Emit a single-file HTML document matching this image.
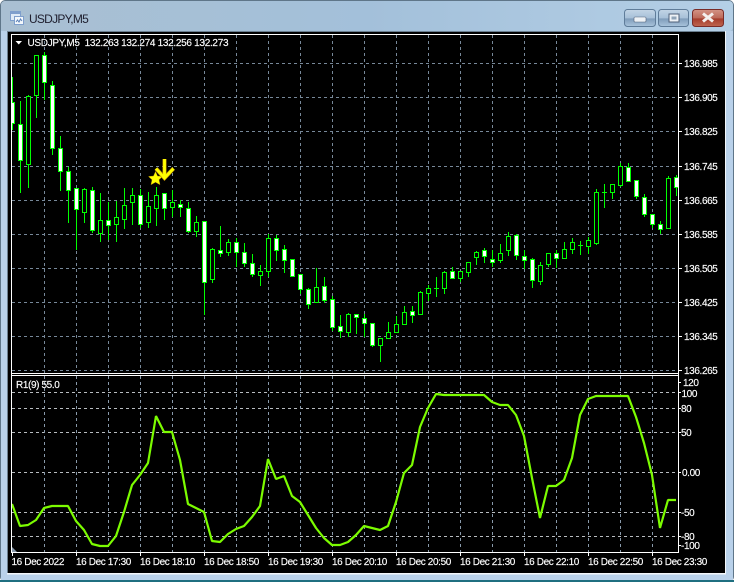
<!DOCTYPE html>
<html><head><meta charset="utf-8"><style>
html,body{margin:0;padding:0;width:736px;height:583px;overflow:hidden;background:#fff}
svg{display:block;position:absolute;left:0;top:0}
text{font-family:"Liberation Sans",sans-serif;font-size:10px;fill:#fff;letter-spacing:-.38px;stroke:#fff;stroke-width:.15px}
</style></head><body>
<svg width="736" height="583" viewBox="0 0 736 583" xmlns="http://www.w3.org/2000/svg">
<defs>
<linearGradient id="t" x1="0" y1="0" x2="1" y2="0"><stop offset="0" stop-color="#a9bfd2"/><stop offset=".5" stop-color="#a3c0da"/><stop offset="1" stop-color="#b4cfe6"/></linearGradient>
<linearGradient id="tv" x1="0" y1="0" x2="0" y2="1"><stop offset="0" stop-color="#a4bfd6"/><stop offset="1" stop-color="#b9d1ea"/></linearGradient>
<linearGradient id="b1" x1="0" y1="0" x2="0" y2="1"><stop offset="0" stop-color="#c3d5e6"/><stop offset=".5" stop-color="#a7c0d8"/><stop offset=".55" stop-color="#7f9cba"/><stop offset="1" stop-color="#a9c4dc"/></linearGradient>
<linearGradient id="b2" x1="0" y1="0" x2="0" y2="1"><stop offset="0" stop-color="#d49486"/><stop offset=".5" stop-color="#bc6a5a"/><stop offset=".55" stop-color="#a63c2c"/><stop offset="1" stop-color="#bf6650"/></linearGradient>
<clipPath id="m"><rect x="12" y="35" width="666" height="338"/></clipPath>
<clipPath id="s"><rect x="12" y="376" width="666" height="176"/></clipPath>
</defs>
<!-- window -->
<rect x="0.5" y="0.5" width="733" height="581" rx="5" fill="url(#tv)" stroke="#5f7689"/>
<rect x="1" y="1" width="732" height="30" rx="4" fill="url(#t)"/>
<rect x="1" y="31" width="7" height="542" fill="#b9d1ea"/>
<rect x="725" y="31" width="8" height="542" fill="#b9d1ea"/>
<rect x="1" y="574" width="732" height="6" fill="#b9d1ea"/>
<rect x="0" y="580" width="734" height="2" fill="#1f6f80"/>
<rect x="7" y="31" width="718" height="543" fill="#6b7f90"/>
<rect x="7" y="573" width="719" height="1.5" fill="#f2f6fa"/>
<rect x="725" y="31" width="1" height="543" fill="#f2f6fa"/>
<rect x="8" y="32" width="717" height="541" fill="#000"/>
<!-- title icon -->
<rect x="10.5" y="11.5" width="10" height="9" fill="#dfeaf6" stroke="#7f9fcc"/>
<rect x="10.5" y="11.5" width="10" height="2.5" fill="#7f9fcc"/>
<rect x="14.5" y="16.5" width="9" height="8" fill="#f4f8fc" stroke="#7f9fcc"/>
<path d="M16 22l1.5-2 1.500 2 1.500-3 1.500 2" fill="none" stroke="#5a80b8"/>
<text x="29" y="23" style="font-size:12px;fill:#202030;stroke:none;letter-spacing:-.75px">USDJPY,M5</text>
<!-- buttons -->
<rect x="624.500" y="9.500" width="31" height="17" rx="3" fill="url(#b1)" stroke="#5f7c99"/>
<rect x="634" y="17" width="12" height="5" rx="1" fill="#eef2f6" stroke="#50617a" stroke-width=".6"/>
<rect x="658.500" y="9.500" width="30" height="17" rx="3" fill="url(#b1)" stroke="#5f7c99"/>
<rect x="669" y="14" width="10" height="8" fill="#eef2f6" stroke="#50617a"/>
<rect x="671.500" y="16.500" width="5" height="3" fill="#90a4b8"/>
<rect x="692.500" y="9.500" width="31" height="17" rx="3" fill="url(#b2)" stroke="#7a2c28"/>
<path d="M703 13.500l10 8M713 13.500l-10 8" stroke="#f4f0ee" stroke-width="3"/>
<!-- chart -->
<g shape-rendering="crispEdges">
<g clip-path="url(#m)" fill="none" stroke="#778899" stroke-dasharray="3 3">
<path d="M12 63.500H678M12 97.500H678M12 131.500H678M12 166.500H678M12 200.500H678M12 234.500H678M12 268.500H678M12 302.500H678M12 336.500H678M12 370.500H678"/>
<path d="M44.500 35V373M76.500 35V373M108.500 35V373M140.500 35V373M172.500 35V373M204.500 35V373M236.500 35V373M268.500 35V373M300.500 35V373M332.500 35V373M364.500 35V373M396.500 35V373M428.500 35V373M460.500 35V373M492.500 35V373M524.500 35V373M556.500 35V373M588.500 35V373M620.500 35V373M652.500 35V373"/>
</g>
<g clip-path="url(#m)">
<path fill="none" stroke="#0f0" d="M12.500 77V130M20.500 101V193M28.500 95V188M36.500 55V118M44.500 52V100M52.500 81V155M60.500 136V191M68.500 167V223M76.500 188V250M84.500 188V223M92.500 187V233M100.500 193V242M108.500 202V240M116.500 201V242M124.500 188V229M132.500 188V225M140.500 189V228M148.500 192V228M156.500 187V226M164.500 193V220M172.500 190V217M180.500 200V217M188.500 202V233M196.500 216V237M204.500 221V315M212.500 248V283M220.500 226V257M228.500 239V256M236.500 238V267M244.500 243V267M252.500 254V277M260.500 265V286M268.500 234V277M276.500 235V261M284.500 245V273M292.500 259V276M300.500 274V294M308.500 288V309M316.500 268V302M324.500 277V303M332.500 296V331M340.500 315V338M348.500 313V337M356.500 314V334M364.500 314V337M372.500 323V347M380.500 338V362M388.500 322V338M396.500 316V332M404.500 306V325M412.500 306V323M420.500 291V315M428.500 285V301M436.500 277V297M444.500 271V294M452.500 267V278M460.500 271V282M468.500 262V277M476.500 251V265M484.500 248V263M492.500 250V267M500.500 244V263M508.500 232V256M516.500 234V260M524.500 250V269M532.500 258V288M540.500 262V285M548.500 253V267M556.500 250V268M564.500 242V258M572.500 238V254M580.500 241V255M588.500 237V254M596.500 189V245M604.500 184V208M612.500 184V199M620.500 163V187M628.500 163V182M636.500 180V199M644.500 194V217M652.500 214V228M660.500 221V234M668.500 176V229M676.500 175V196M434 288.500h5M578 245.500h5M602 192.500h5"/>
<path fill="#000" stroke="#0f0" d="M26.500 96.500h4v68h-4zM34.500 55.500h4v40h-4zM82.500 189.500h4v23h-4zM98.500 220.500h4v13h-4zM114.500 217.500h4v7h-4zM122.500 205.500h4v14h-4zM130.500 195.500h4v7h-4zM146.500 206.500h4v16h-4zM154.500 195.500h4v13h-4zM170.500 202.500h4v5h-4zM194.500 222.500h4v9h-4zM210.500 249.500h4v30h-4zM226.500 242.500h4v10h-4zM258.500 271.500h4v4h-4zM266.500 238.500h4v33h-4zM314.500 287.500h4v15h-4zM346.500 314.500h4v18h-4zM378.500 338.500h4v7h-4zM386.500 332.500h4v6h-4zM394.500 324.500h4v8h-4zM402.500 312.500h4v12h-4zM418.500 292.500h4v22h-4zM426.500 288.500h4v5h-4zM442.500 272.500h4v16h-4zM458.500 271.500h4v7h-4zM466.500 262.500h4v10h-4zM474.500 252.500h4v5h-4zM498.500 253.500h4v7h-4zM506.500 236.500h4v14h-4zM538.500 265.500h4v16h-4zM546.500 253.500h4v11h-4zM562.500 249.500h4v9h-4zM570.500 242.500h4v7h-4zM586.500 240.500h4v6h-4zM594.500 192.500h4v51h-4zM610.500 184.500h4v8h-4zM618.500 166.500h4v19h-4zM666.500 178.500h4v50h-4z"/>
<path fill="#fff" stroke="#0f0" d="M10.500 102.500h4v21h-4zM18.500 124.500h4v36h-4zM42.500 55.500h4v27h-4zM50.500 85.500h4v63h-4zM58.500 148.500h4v23h-4zM66.500 171.500h4v19h-4zM74.500 188.500h4v21h-4zM90.500 190.500h4v40h-4zM106.500 220.500h4v5h-4zM138.500 195.500h4v29h-4zM162.500 193.500h4v15h-4zM178.500 204.500h4v3h-4zM186.500 208.500h4v23h-4zM202.500 221.500h4v61h-4zM218.500 250.500h4v3h-4zM234.500 242.500h4v10h-4zM242.500 252.500h4v11h-4zM250.500 263.500h4v11h-4zM274.500 238.500h4v12h-4zM282.500 249.500h4v11h-4zM290.500 259.500h4v17h-4zM298.500 274.500h4v15h-4zM306.500 289.500h4v15h-4zM322.500 286.500h4v14h-4zM330.500 299.500h4v28h-4zM338.500 326.500h4v5h-4zM354.500 314.500h4v3h-4zM362.500 318.500h4v5h-4zM370.500 323.500h4v22h-4zM410.500 311.500h4v4h-4zM450.500 271.500h4v7h-4zM482.500 250.500h4v6h-4zM490.500 259.500h4v3h-4zM514.500 235.500h4v20h-4zM522.500 256.500h4v4h-4zM530.500 259.500h4v21h-4zM554.500 253.500h4v5h-4zM626.500 167.500h4v14h-4zM634.500 180.500h4v16h-4zM642.500 197.500h4v17h-4zM650.500 214.500h4v10h-4zM658.500 224.500h4v5h-4zM674.500 177.500h4v10h-4z"/>
</g>
<g clip-path="url(#s)" fill="none" stroke-dasharray="3 3">
<path stroke="#b8bcc0" d="M12 392.500H678M12 408.500H678M12 432.500H678M12 472.500H678M12 512.500H678M12 536.500H678"/>
<path stroke="#8899aa" d="M44.500 376V552M76.500 376V552M108.500 376V552M140.500 376V552M172.500 376V552M204.500 376V552M236.500 376V552M268.500 376V552M300.500 376V552M332.500 376V552M364.500 376V552M396.500 376V552M428.500 376V552M460.500 376V552M492.500 376V552M524.500 376V552M556.500 376V552M588.500 376V552M620.500 376V552M652.500 376V552"/>
</g>
</g>
<polyline clip-path="url(#s)" fill="none" stroke="#7cfc00" stroke-width="2.200" stroke-linejoin="bevel" points="12,504 20,526 28,525 36,520 44,508 52,506 60,506 68,506 76,521 84,530 92,544 100,546 108,546 116,536 124,512 132,485 140,475 148,463 156,416 164,432 172,432 180,460 188,504 196,508 204,512 212,541 220,542 228,534 236,529 244,526 252,517 260,506 268,459 276,479 284,476 292,496 300,502 308,515 316,528 324,538 332,545 340,545 348,542 356,535 364,526 372,528 380,530 388,526 396,502 404,473 412,465 420,427 428,408 436,394 444,395 452,395 460,395 468,395 476,395 484,395 492,402 500,405 508,405 516,415 524,436 532,478 540,518 548,486 556,486 564,480 572,458 580,415 588,399 596,396 604,396 612,396 620,396 628,396 636,417 644,443 652,475 660,528 668,500 676,500"/>
<!-- arrow & star -->
<path d="M155.500 171.500l2 4.500 5 .5-3.500 3.200 1 5-4.500-2.500-4.500 2.500 1-5-3.500-3.200 5-.5z" fill="#ffff00" stroke="#c09000" stroke-width=".4"/>
<path d="M164.500 159V177M156 168.500l8.500 9.500 9-9.500" fill="none" stroke="#c09000" stroke-width="4"/>
<path d="M164.500 159V177M156 168.500l8.500 9.500 9-9.500" fill="none" stroke="#ffff00" stroke-width="2.800"/>
<!-- frame -->
<g shape-rendering="crispEdges" stroke="#fff" fill="none">
<path d="M11.500 34.500H678.500V552.500H11.500Z"/>
<path d="M11.500 373.500H678.500M11.500 375.500H678.500"/>
<path d="M679 63.500h3M679 97.500h3M679 131.500h3M679 166.500h3M679 200.500h3M679 234.500h3M679 268.500h3M679 302.500h3M679 336.500h3M679 370.500h3M679 382.500h2M679 392.500h2M679 408.500h2M679 432.500h2M679 472.500h2M679 512.500h2M679 536.500h2M679 545.500h2"/>
<path d="M12.500 553v3M76.500 553v3M140.500 553v3M204.500 553v3M268.500 553v3M332.500 553v3M396.500 553v3M460.500 553v3M524.500 553v3M588.500 553v3M652.500 553v3"/>
</g>
<path d="M12 547l5 5h-5z" fill="#8899aa"/>
<path d="M15.500 41h6.500l-3.250 3.500z" fill="#fff"/>
<!-- text -->
<text x="27.500" y="46" style="letter-spacing:-.3px">USDJPY,M5 &#160;132.263 132.274 132.256 132.273</text>
<text x="16" y="388">R1(9) 55.0</text>
<text x="684" y="67">136.985</text>
<text x="684" y="101">136.905</text>
<text x="684" y="135">136.825</text>
<text x="684" y="170">136.745</text>
<text x="684" y="204">136.665</text>
<text x="684" y="238">136.585</text>
<text x="684" y="272">136.505</text>
<text x="684" y="306">136.425</text>
<text x="684" y="340">136.345</text>
<text x="684" y="374">136.265</text>
<text x="683" y="386">120</text>
<text x="681.500" y="397">100</text>
<text x="681" y="412">80</text>
<text x="681" y="436">50</text>
<text x="682" y="476">0.00</text>
<text x="681" y="516">-50</text>
<text x="681" y="540">-80</text>
<text x="681" y="549">-100</text>
<text x="11.500" y="565">16 Dec 2022</text>
<text x="76" y="565">16 Dec 17:30</text>
<text x="140" y="565">16 Dec 18:10</text>
<text x="204" y="565">16 Dec 18:50</text>
<text x="268" y="565">16 Dec 19:30</text>
<text x="332" y="565">16 Dec 20:10</text>
<text x="396" y="565">16 Dec 20:50</text>
<text x="460" y="565">16 Dec 21:30</text>
<text x="524" y="565">16 Dec 22:10</text>
<text x="588" y="565">16 Dec 22:50</text>
<text x="652" y="565">16 Dec 23:30</text>
</svg>
</body></html>
